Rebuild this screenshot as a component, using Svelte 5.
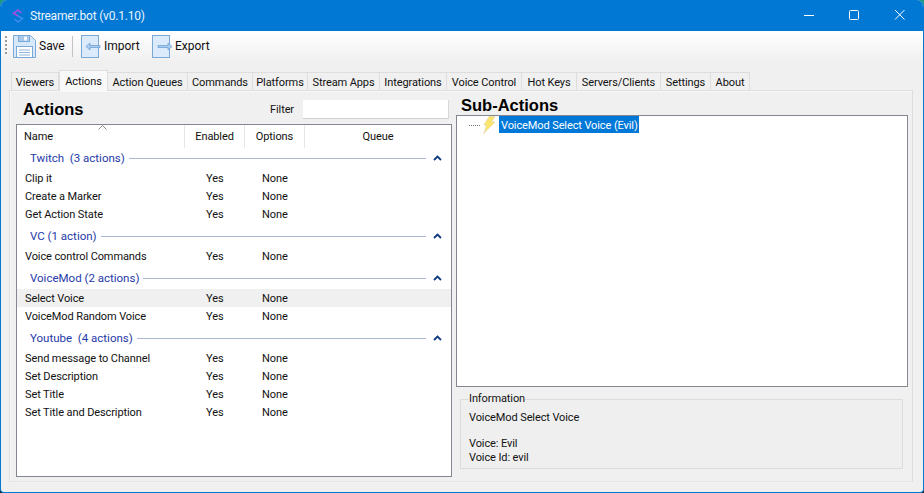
<script>
  const tabs = [
    { name: 'Viewers', width: 48 },
    { name: 'Actions', width: 49, active: true },
    { name: 'Action Queues', width: 80 },
    { name: 'Commands', width: 65 },
    { name: 'Platforms', width: 55 },
    { name: 'Stream Apps', width: 72 },
    { name: 'Integrations', width: 67 },
    { name: 'Voice Control', width: 75 },
    { name: 'Hot Keys', width: 55 },
    { name: 'Servers/Clients', width: 84 },
    { name: 'Settings', width: 50 },
    { name: 'About', width: 39 }
  ]

  const groups = [
    { title: 'Twitch  (3 actions)', rows: ['Clip it', 'Create a Marker', 'Get Action State'] },
    { title: 'VC (1 action)', rows: ['Voice control Commands'] },
    { title: 'VoiceMod (2 actions)', rows: ['Select Voice', 'VoiceMod Random Voice'] },
    { title: 'Youtube  (4 actions)', rows: ['Send message to Channel', 'Set Description', 'Set Title', 'Set Title and Description'] }
  ]
</script>

<div class="window">
  <header class="titlebar">
    <svg class="logo" width="12" height="16" viewBox="0 0 12 16" fill="none">
      <path d="M9.500 5 6 2 1.500 5.500 6 8" stroke="#b04be0" stroke-width="1.500" />
      <path d="M2.500 11 6 14 10.500 10.500 6 8" stroke="#3f8cf0" stroke-width="1.500" />
    </svg>
    <span class="title">Streamer.bot (v0.1.10)</span>
    <div class="controls">
      <svg width="110" height="31" viewBox="0 0 110 31" stroke="#fff" fill="none">
        <path d="M0 15.500h10" />
        <rect x="45.500" y="10.500" width="9" height="9" rx="1" />
        <path d="M91 10l9.500 9.500M100.500 10 91 19.500" />
      </svg>
    </div>
  </header>

  <div class="toolbar">
    <span class="grip"></span>
    <button class="tool save">
      <svg width="23" height="23" viewBox="0 0 23 23">
        <path d="M.5.500h17l5 5v17H.5z" fill="#d6e8f9" stroke="#7aa9d8" />
        <rect x="5.500" y=".5" width="11" height="6" fill="#a9c9ea" stroke="#7aa9d8" />
        <rect x="11" y="1.500" width="3" height="4" fill="#f3f8fd" />
        <rect x="3.500" y="11.500" width="16" height="11" fill="#fff" stroke="#7aa9d8" />
        <path d="M6 15h11M6 17.500h11M6 20h11" stroke="#8fb5dc" />
      </svg>
      <span>Save</span>
    </button>
    <span class="sep"></span>
    <button class="tool import">
      <svg width="20" height="23" viewBox="0 0 20 23">
        <rect x=".5" y=".5" width="17" height="22" fill="#dcebfb" stroke="#7aa9d8" />
        <path d="M19 10.500h-10V8l-4 3.500 4 3.500v-2.500h10z" fill="#a9cdf0" stroke="#6e9fd2" stroke-width=".8" />
      </svg>
      <span>Import</span>
    </button>
    <button class="tool export">
      <svg width="20" height="23" viewBox="0 0 20 23">
        <rect x=".5" y=".5" width="17" height="22" fill="#dcebfb" stroke="#7aa9d8" />
        <path d="M6 10.500h10V8l4 3.500-4 3.500v-2.500H6z" fill="#a9cdf0" stroke="#6e9fd2" stroke-width=".8" />
      </svg>
      <span>Export</span>
    </button>
  </div>

  <nav class="tabs">
    {#each tabs as tab}
      <div class="tab" class:active={tab.active} style="width: {tab.width}px">{tab.name}</div>
    {/each}
  </nav>

  <main class="panel">
    <section class="left">
      <div class="actions-head">
        <h1>Actions</h1>
        <label for="filter">Filter</label>
        <input id="filter" />
      </div>
      <div class="list">
        <div class="list-head">
          <span class="col name">Name
            <svg class="sort" width="9" height="5" viewBox="0 0 9 5" fill="none" stroke="#8a8a8a"><path d="M.5 4.500l4-4 4 4" /></svg>
          </span>
          <span class="col enabled">Enabled</span>
          <span class="col options">Options</span>
          <span class="col queue">Queue</span>
        </div>
        {#each groups as group, i}
          <div class="group" class:first={i === 0}>
            <span class="group-title">{group.title}</span>
            <span class="group-line"></span>
            <svg class="chevron" width="9" height="6" viewBox="0 0 9 6" fill="none" stroke="#0f3a80" stroke-width="1.800"><path d="M1 5l3.500-3.500L8 5" /></svg>
          </div>
          {#each group.rows as row}
            <div class="row" class:selected={row === 'Select Voice'}>
              <span class="cell-name">{row}</span>
              <span class="cell-yes">Yes</span>
              <span class="cell-none">None</span>
            </div>
          {/each}
        {/each}
      </div>
    </section>

    <section class="right">
      <h2>Sub-Actions</h2>
      <div class="tree">
        <span class="dots"></span>
        <svg class="bolt" width="13" height="18" viewBox="0 0 13 18">
          <path d="M6 .5h6L8.500 6H12L3 15l-2 2.500L3.500 9H1z" fill="#fbe56a" stroke="#e8d9a8" stroke-width=".8" />
        </svg>
        <span class="node">VoiceMod Select Voice (Evil)</span>
      </div>
      <fieldset class="info">
        <legend>Information</legend>
        <p>VoiceMod Select Voice</p>
        <p class="details">Voice: Evil<br />Voice Id: evil</p>
      </fieldset>
    </section>
  </main>
</div>

<style>
  :global(body) {
    margin: 0;
    background: linear-gradient(#1f9a80 0 50%, #222 50%);
    overflow: hidden;
  }
  .window {
    width: 924px;
    height: 493px;
    box-sizing: border-box;
    display: flex;
    flex-direction: column;
    background: #f0f0f0;
    border: 1px solid #0078d4;
    border-top: 0;
    border-radius: 7px 7px 4px 4px;
    overflow: hidden;
    font: 11px/14px Roboto, "Liberation Sans", sans-serif;
    letter-spacing: -.1px;
    color: #111;
  }
  .titlebar {
    height: 31px;
    flex: none;
    background: #0078d4;
    display: flex;
    align-items: center;
    padding-left: 11px;
    color: #fff;
  }
  .logo { margin-right: 6px; }
  .title { font-size: 12px; letter-spacing: -.2px; color: #eaf4fc; }
  .controls { margin-left: auto; margin-right: 9px; height: 31px; }
  .controls svg { display: block; }

  .toolbar {
    height: 31px;
    flex: none;
    box-sizing: border-box;
    padding: 4px 0 4px 4px;
    display: flex;
    align-items: flex-start;
    background: linear-gradient(#fff, #f0f0f0);
  }
  .grip {
    width: 2px;
    height: 18px;
    margin: 1px 6px 0 0;
    background: repeating-linear-gradient(#9a9a9a 0 2px, transparent 2px 4px);
  }
  .tool {
    display: flex;
    align-items: center;
    gap: 3px;
    padding: 0;
    border: 0;
    background: none;
    font: inherit;
    font-size: 12px;
    height: 23px;
    color: #111;
  }
  .tool svg { flex: none; }
  .tool span { position: relative; top: -1px; }
  .tool.save { width: 50px; }
  .tool.import { width: 71px; }
  .sep {
    width: 1px;
    height: 21px;
    margin: 1px 8px 0 9px;
    background: #c4c4c4;
  }

  .tabs {
    height: 28px;
    flex: none;
    box-sizing: border-box;
    padding: 10px 0 0 10px;
    display: flex;
    align-items: flex-end;
  }
  .tab {
    height: 18px;
    flex: none;
    box-sizing: border-box;
    border: 1px solid #dedede;
    border-bottom: 0;
    text-align: center;
    line-height: 20px;
    white-space: nowrap;
  }
  .tab + .tab { border-left: 0; }
  .tab.active {
    height: 21px;
    margin-bottom: -1px;
    background: #f9f9f9;
    position: relative;
    z-index: 1;
    line-height: 21px;
    border-left: 1px solid #dedede;
  }

  .panel {
    width: 904px;
    height: 392px;
    flex: none;
    margin-left: 8px;
    box-sizing: border-box;
    border: 1px solid #dedede;
    border-bottom-color: #e4e4e4;
    box-shadow: inset 1px 1px 0 #f8f8f8;
    padding: 0 4px 0 6px;
    display: flex;
    gap: 4px;
  }

  .left { width: 436px; flex: none; }
  .actions-head {
    height: 33px;
    display: flex;
    align-items: center;
  }
  h1 {
    font: bold 16.500px "Liberation Sans", sans-serif;
    letter-spacing: 0;
    margin: 3px 0 0 7px;
    color: #000;
    width: 247px;
  }
  label { width: 33px; position: relative; top: 2px; }
  input {
    width: 146px;
    height: 19px;
    margin-top: 3px;
    box-sizing: border-box;
    background: #fff;
    border: 0;
    border-right: 1px solid #d8d8d8;
    border-bottom: 1px solid #d0d0d0;
    padding: 0;
  }

  .list {
    height: 353px;
    box-sizing: border-box;
    border: 1px solid #828790;
    background: #fff;
  }
  .list-head {
    height: 22px;
    display: grid;
    grid-template-columns: 168px 60px 60px 1fr;
  }
  .col {
    box-sizing: border-box;
    height: 23px;
    padding-top: 4px;
    line-height: 16px;
    border-right: 1px solid #e6e6e6;
    text-align: center;
  }
  .col.name {
    text-align: left;
    padding-left: 7px;
    position: relative;
  }
  .col.queue { border-right: 0; }
  .sort {
    position: absolute;
    left: 81px;
    top: 0;
  }
  .group {
    height: 22px;
    margin-top: 2px;
    display: flex;
    align-items: center;
    padding-left: 13px;
    color: #1f3aa8;
  }
  .group.first { margin-top: 0; }
  .group-title { white-space: pre; font-size: 11.500px; letter-spacing: 0; }
  .group-line {
    flex: 1;
    height: 1px;
    margin: 0 7px 0 4px;
    background: #a9b7d3;
  }
  .chevron { margin-right: 9px; }
  .row {
    height: 18px;
    display: grid;
    grid-template-columns: 181px 56px 1fr;
    align-items: center;
    padding-left: 8px;
    line-height: 20px;
  }
  .row.selected { background: #f0f0f0; }

  .right { width: 452px; flex: none; }
  h2 {
    font: bold 16.500px/28px "Liberation Sans", sans-serif;
    letter-spacing: 0;
    margin: 0 0 0 5px;
    height: 24px;
    color: #000;
  }
  .tree {
    height: 272px;
    box-sizing: border-box;
    border: 1px solid #828790;
    background: #fff;
    display: flex;
    align-items: flex-start;
    padding-left: 12px;
  }
  .dots {
    width: 11px;
    height: 0;
    margin-top: 9px;
    margin-right: 3px;
    border-top: 1px dotted #777;
  }
  .bolt { flex: none; margin-right: 3px; }
  .node {
    background: #0078d7;
    color: #fff;
    height: 17px;
    line-height: 20px;
    padding: 0 1px 0 2px;
    white-space: nowrap;
  }
  .info {
    margin: 4px 5px 0 4px;
    height: 78px;
    box-sizing: border-box;
    padding: 0 8px;
    border: 1px solid #dcdcdc;
    background: #efefef;
    min-width: 0;
  }
  legend { padding: 0; margin-left: 0; line-height: 16px; }
  .info p { margin: 4px 0 0; }
  .info p.details { margin-top: 12px; }
</style>
